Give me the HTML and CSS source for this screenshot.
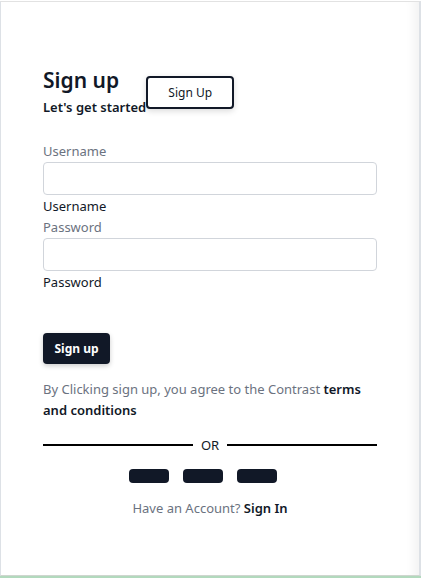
FILE: index.html
```html
<!DOCTYPE html>
<html>
<head>
<meta charset="utf-8">
<link rel="stylesheet" href="styles.css">
</head>
<body>
<div class="frame">
  <div class="card">
    <div class="head">
      <div class="titles">
        <h1 class="title">Sign up</h1>
        <p class="subtitle">Let's get started</p>
      </div>
      <button class="outline-btn">Sign Up</button>
    </div>
    <form class="form">
      <div class="field">
        <label class="label">Username</label>
        <input class="input" type="text">
        <span class="hint">Username</span>
      </div>
      <div class="field">
        <label class="label">Password</label>
        <input class="input" type="password">
        <span class="hint">Password</span>
      </div>
      <button class="primary-btn" type="button">Sign up</button>
    </form>
    <p class="terms">By Clicking sign up, you agree to the Contrast <b>terms and conditions</b></p>
    <div class="divider"><span class="line"></span><span class="or">OR</span><span class="line"></span></div>
    <div class="socials">
      <span class="social"></span>
      <span class="social"></span>
      <span class="social"></span>
    </div>
    <p class="account">Have an Account? <b>Sign In</b></p>
  </div>
</div>
<div class="strip"></div>
</body>
</html>
```
FILE: styles.css
```css
html, body {
  margin: 0;
  padding: 0;
  background: #fff;
}
body {
  font-family: "Noto Sans", "Open Sans", sans-serif;
  color: #111827;
  padding-top: 1px;
}
.frame {
  width: 418px;
  height: 573px;
  border-top: 1px solid #e2e2e2;
  border-left: 1px solid #dde1e6;
  border-right: 2px solid #dde1e6;
  border-bottom: 1px solid #cfd6cf;
  box-shadow: inset -14px 0 12px -10px rgba(0,0,0,0.06);
  box-sizing: content-box;
}
.strip {
  width: 421px;
  height: 2px;
  background: #b2d9bd;
}
.card {
  padding: 63px 42px 0 42px;
}
.head {
  display: flex;
  align-items: flex-start;
}
.title {
  margin: 0;
  font-size: 21px;
  font-weight: 600;
  line-height: 30px;
}
.subtitle {
  margin: 3px 0 0;
  font-size: 13px;
  font-weight: 600;
  line-height: 18px;
}
.outline-btn {
  margin: 11px 0 0 0;
  width: 88px;
  height: 33px;
  border: 2px solid #111827;
  border-radius: 4px;
  background: #fff;
  box-shadow: 0 2px 6px rgba(0,0,0,0.15);
  font-family: inherit;
  font-size: 12px;
  color: #111827;
  padding: 0;
}
.form {
  margin-top: 27px;
  display: flex;
  flex-direction: column;
}
.field {
  display: flex;
  flex-direction: column;
}
.label {
  font-size: 13px;
  line-height: 17px;
  color: #6b7280;
}
.input {
  margin-top: 2px;
  height: 33px;
  box-sizing: border-box;
  border: 1px solid #d1d5db;
  border-radius: 4px;
  width: 100%;
}
.hint {
  margin-top: 2px;
  font-size: 13px;
  line-height: 18px;
  color: #111827;
}
.field + .field {
  margin-top: 4px;
}
.primary-btn {
  margin-top: 42px;
  align-self: flex-start;
  width: 67px;
  height: 31px;
  border: none;
  border-radius: 4px;
  background: #111827;
  color: #fff;
  font-family: inherit;
  font-size: 12px;
  font-weight: 700;
  box-shadow: 0 2px 5px rgba(0,0,0,0.2);
  padding: 0;
}
.terms {
  margin: 15px 0 0;
  font-size: 13px;
  line-height: 21px;
  color: #6b7280;
}
.terms b {
  color: #111827;
  font-weight: 600;
}
.divider {
  margin-top: 15px;
  display: flex;
  align-items: center;
  gap: 8px;
}
.line {
  flex: 1;
  height: 2px;
  background: #000;
}
.or {
  font-size: 13px;
  line-height: 18px;
  color: #111827;
}
.socials {
  margin-top: 15px;
  padding-right: 14px;
  display: flex;
  justify-content: center;
  gap: 14px;
}
.social {
  width: 40px;
  height: 14px;
  border-radius: 4px;
  background: #111827;
}
.account {
  margin: 15px 0 0;
  text-align: center;
  font-size: 13px;
  line-height: 20px;
  color: #6b7280;
}
.account b {
  color: #111827;
  font-weight: 600;
}
```
